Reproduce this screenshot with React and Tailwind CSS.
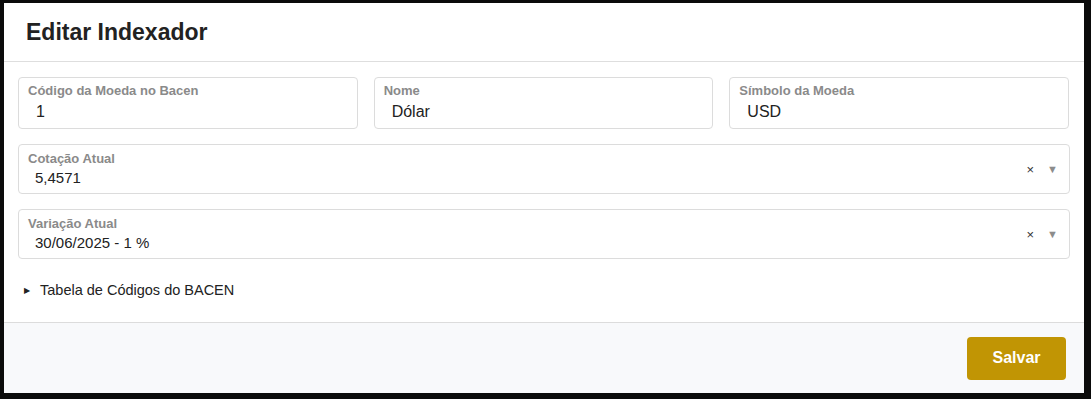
const fieldBox = 'rounded-[4px] border border-[#dcdcdc] bg-white px-[9px] pt-[6px] pb-[5px]'

function Field({ label, value }) {
  return (
    <div className={fieldBox + ' h-[52px]'}>
      <div className="text-[13px] font-bold leading-[14px] text-[#8a8a8a]">{label}</div>
      <div className="mt-[4px] pl-[8px] text-[16px] leading-[19px] text-[#222]">{value}</div>
    </div>
  )
}

function SelectField({ label, value }) {
  return (
    <div className={fieldBox + ' flex h-[50px] items-center'}>
      <div className="flex-1">
        <div className="text-[13px] font-bold leading-[14px] text-[#8a8a8a]">{label}</div>
        <div className="mt-[3px] pl-[7px] text-[15px] leading-[18px] text-[#222]">{value}</div>
      </div>
      <span className="mr-[13px] text-[13px] leading-none text-[#333]">×</span>
      <span className="mr-[2px] text-[11px] leading-none text-[#8c8c8c]">▼</span>
    </div>
  )
}

export default function App() {
  return (
    <div className="h-[399px] w-[1091px] bg-[#0b0b0b] pt-[3px] pl-[4px]" style={{ fontFamily: '"Liberation Sans", Arial, sans-serif' }}>
      <div className="flex h-[390px] w-[1080px] flex-col bg-white">
        {/* header */}
        <div className="flex h-[59px] items-center border-b border-[#dedede] px-[22px]">
          <h1 className="text-[23px] font-bold text-[#222]">Editar Indexador</h1>
        </div>

        {/* body */}
        <div className="flex flex-1 flex-col gap-[15px] px-[14px] pt-[15px]">
          <div className="grid grid-cols-3 gap-[16px] pr-[1px]">
            <Field label="Código da Moeda no Bacen" value="1" />
            <Field label="Nome" value="Dólar" />
            <Field label="Símbolo da Moeda" value="USD" />
          </div>
          <SelectField label="Cotação Atual" value="5,4571" />
          <SelectField label="Variação Atual" value="30/06/2025 - 1 %" />
          <div className="mt-[6px] flex items-center pl-[6px] text-[14.5px] text-[#222]">
            <span className="mr-[10px] text-[8px]">▶</span>
            Tabela de Códigos do BACEN
          </div>
        </div>

        {/* footer */}
        <div className="flex h-[71px] items-center justify-end border-t border-[#dcdcdc] bg-[#f8f9fb] pr-[18px]">
          <button className="h-[43px] w-[99px] rounded-[4px] bg-[#c19504] text-[16px] font-bold text-white">
            Salvar
          </button>
        </div>
      </div>
    </div>
  )
}
